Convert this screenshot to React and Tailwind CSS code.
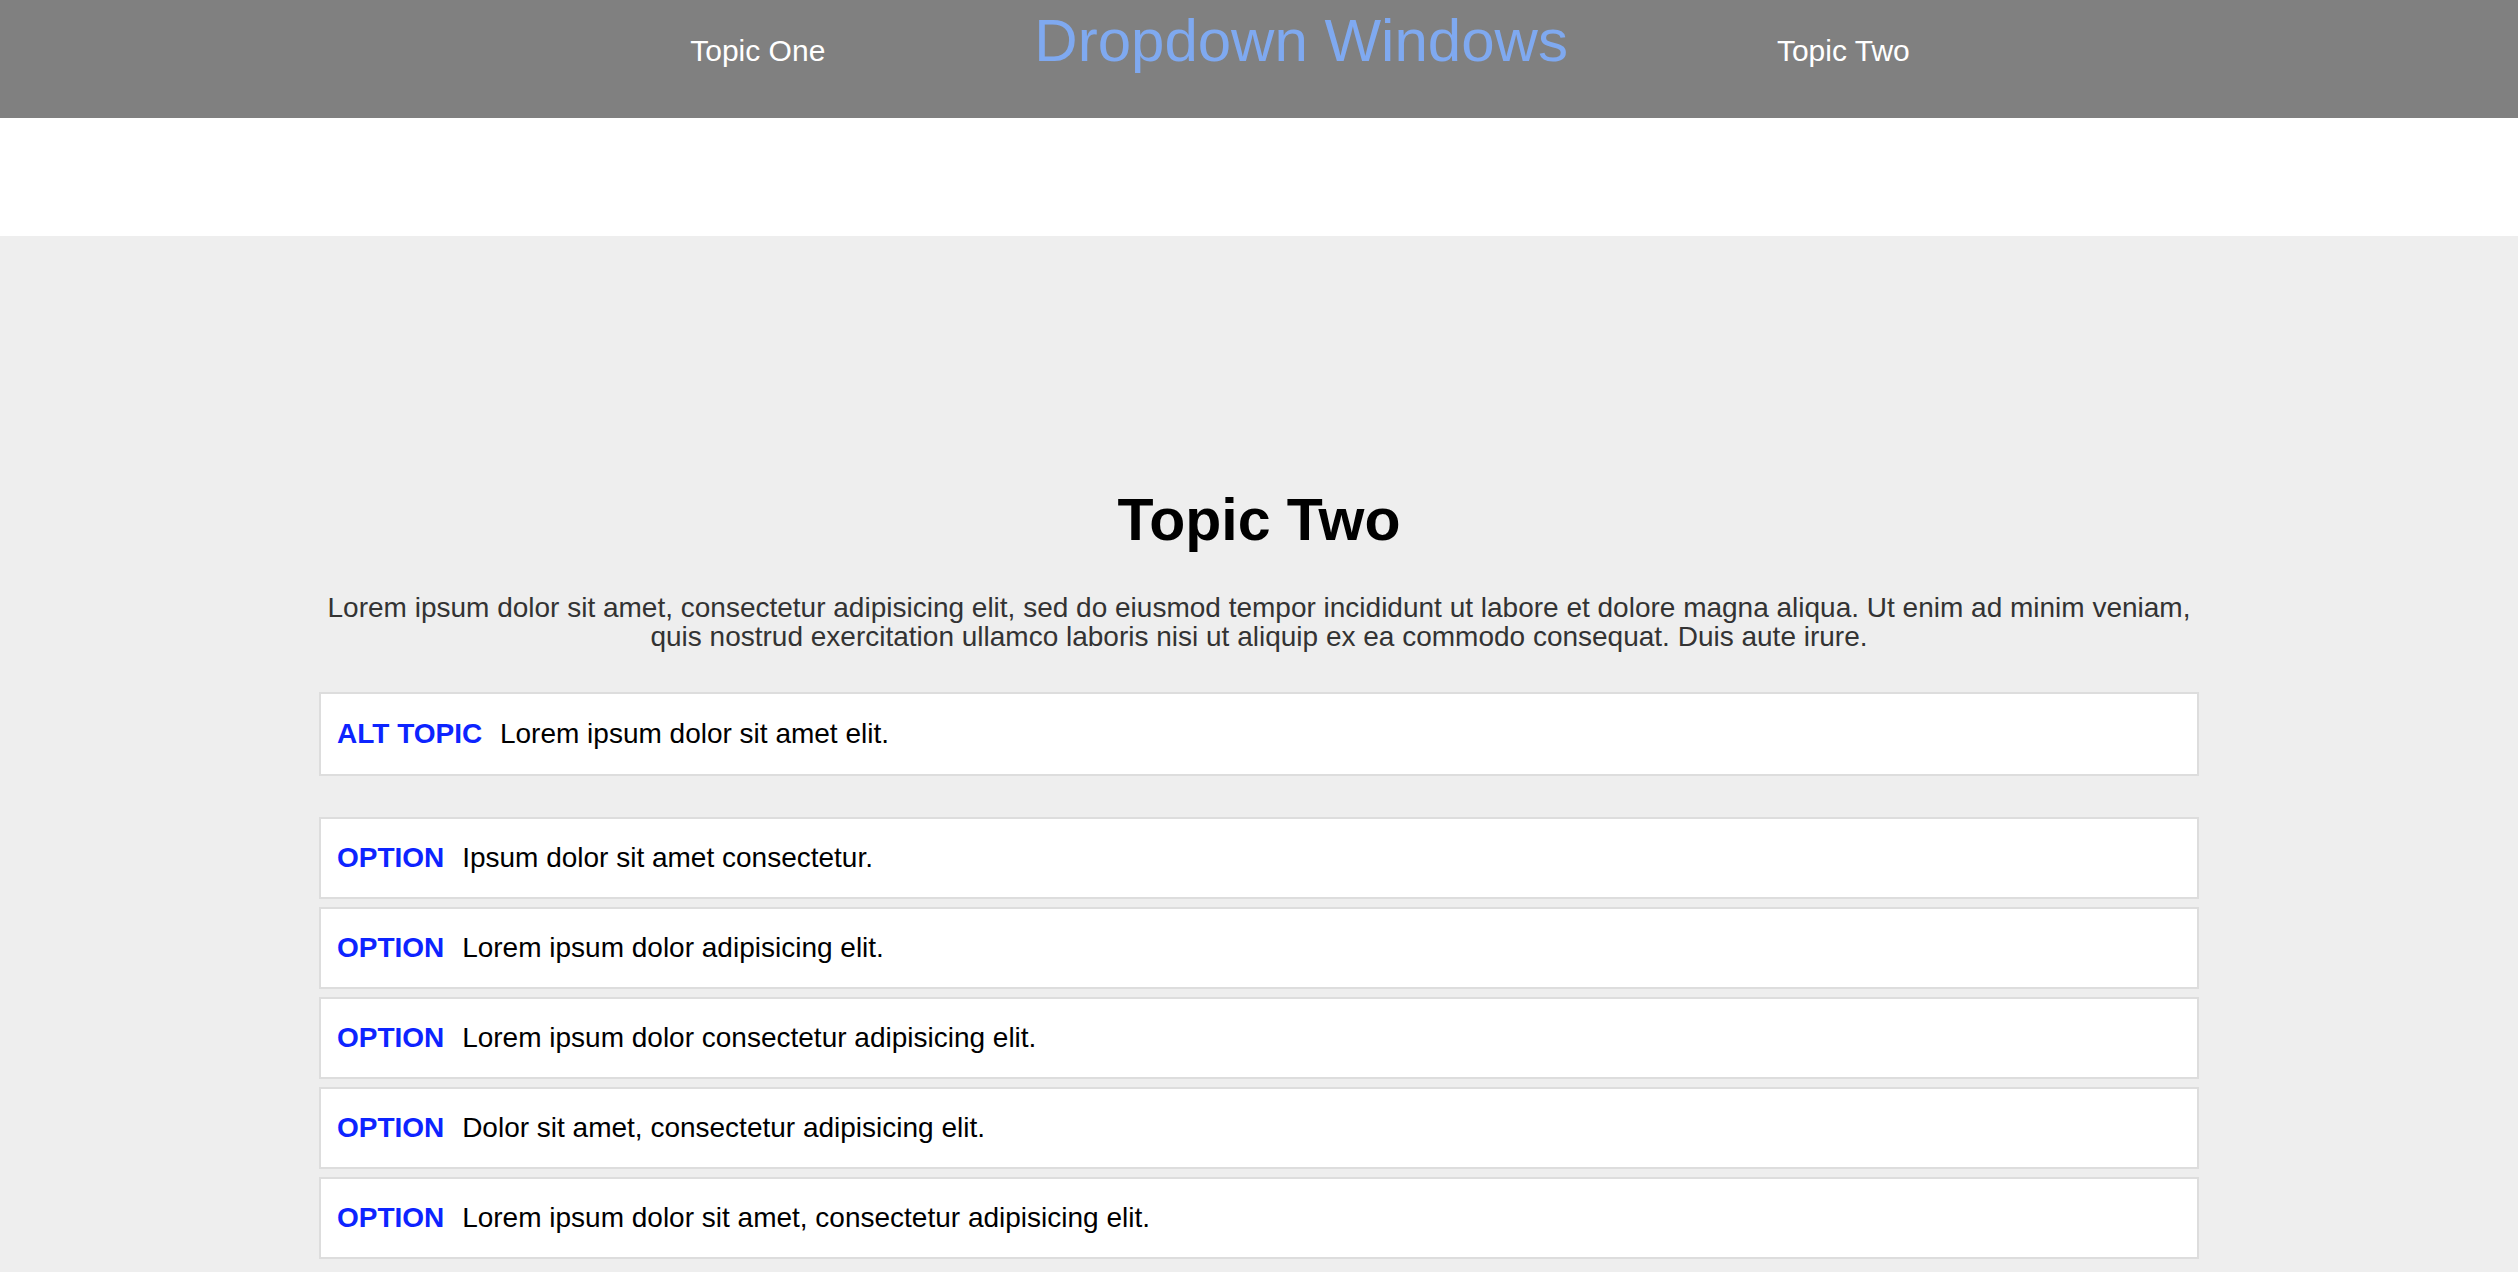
export default function App() {
  const options = [
    'Ipsum dolor sit amet consectetur.',
    'Lorem ipsum dolor adipisicing elit.',
    'Lorem ipsum dolor consectetur adipisicing elit.',
    'Dolor sit amet, consectetur adipisicing elit.',
    'Lorem ipsum dolor sit amet, consectetur adipisicing elit.',
  ]

  return (
    <div className="min-h-screen bg-[#eeeeee] font-['Liberation_Sans',Arial,sans-serif]">
      <header className="h-[118px] bg-[#808080] flex items-baseline justify-center pt-[6px] pl-[82px] gap-[209px]">
        <a className="text-[30px] text-white leading-[36px]">Topic One</a>
        <h2 className="text-[60px] text-[#7fa9f0] leading-[69px]">Dropdown Windows</h2>
        <a className="text-[30px] text-white leading-[36px]">Topic Two</a>
      </header>

      <div className="h-[118px] bg-white" />

      <main className="w-[1880px] mx-auto pt-[251px] pb-[13px]">
        <h1 className="text-center text-[59px] font-bold text-black leading-[67px]">Topic Two</h1>
        <p className="mt-[39px] text-center text-[28px] leading-[29px] text-[#333333]">
          Lorem ipsum dolor sit amet, consectetur adipisicing elit, sed do eiusmod tempor incididunt ut labore et dolore magna aliqua. Ut enim ad minim veniam, quis nostrud exercitation ullamco laboris nisi ut aliquip ex ea commodo consequat. Duis aute irure.
        </p>

        <div className="mt-[41px] bg-white border-2 border-[#dddddd] px-[16px] py-[24px] text-[28px] leading-[32px] text-black">
          <span className="font-bold text-[#0d24ff] mr-[10px]">ALT TOPIC</span> Lorem ipsum dolor sit amet elit.
        </div>

        <div className="mt-[41px] flex flex-col gap-[8px]">
          {options.map((o) => (
            <div key={o} className="bg-white border-2 border-[#dddddd] px-[16px] py-[23px] text-[28px] leading-[32px] text-black">
              <span className="font-bold text-[#0d24ff] mr-[10px]">OPTION</span> {o}
            </div>
          ))}
        </div>
      </main>
    </div>
  )
}
